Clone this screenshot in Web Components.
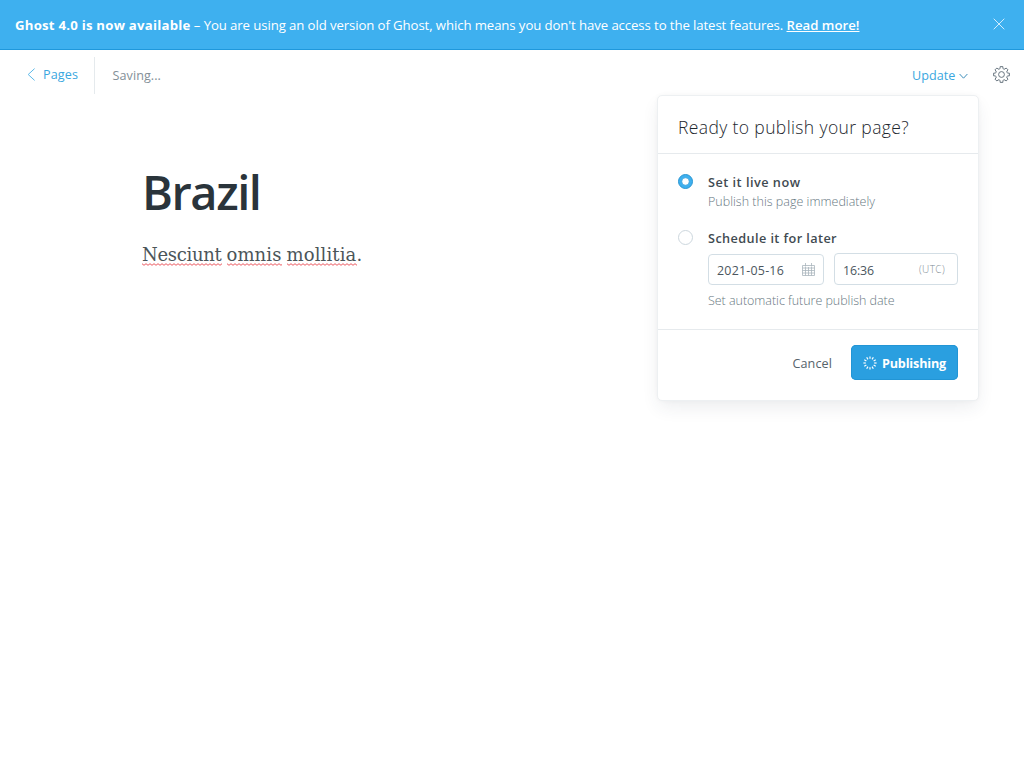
<!DOCTYPE html>
<html lang="en">
<head>
<meta charset="utf-8">
<title>Brazil - Editor</title>
<style>
html,body{margin:0;height:100%;background:#fff;overflow:hidden}
body{font-family:"Open Sans","Noto Sans",sans-serif;color:#394047}
</style>
</head>
<body>
<editor-app></editor-app>
<script>
const define = (name, html, init) => customElements.define(name, class extends HTMLElement {
  constructor(){ super(); const t=document.createElement('template'); t.innerHTML=html;
    this.attachShadow({mode:'open'}).append(t.content.cloneNode(true)); }
  connectedCallback(){ if(init) init(this); }
});

/* One line of text tracked to fill the width given in its "w" attribute. */
define('fit-text', `<style>:host{display:inline-block;white-space:pre;line-height:20px;flex:none}</style><slot></slot>`, el=>{
  const w=+el.getAttribute('w'); if(!w) return;
  el.style.letterSpacing='0px';
  const n=el.textContent.length;
  el.style.letterSpacing=((w-el.getBoundingClientRect().width)/n).toFixed(4)+'px';
});

define('upgrade-banner', `<style>
:host{display:flex;box-sizing:border-box;height:50px;padding:0 19px 0 15px;align-items:center;background:#3eb0ef;border-bottom:1px solid #1f98dc;color:#fff;font-size:13.2px}
.b{font-weight:700}.l{font-weight:600;text-decoration:underline;text-underline-offset:1px}
svg{margin-left:auto;margin-top:-1px}
</style><fit-text class="b" w="175.500">Ghost 4.0 is now available</fit-text><fit-text w="596"> – You are using an old version of Ghost, which means you don't have access to the latest features. </fit-text><fit-text class="l" w="73">Read more!</fit-text>
<svg width="12" height="12" viewBox="0 0 12 12" fill="none" stroke="#e2f4ff" stroke-width=".9"><path d="M.7.7l10.6 10.6M11.3.7L.7 11.3"/></svg>`);

define('editor-toolbar', `<style>
:host{display:flex;height:45px;padding:0 14.500px 0 27px;align-items:flex-start;font-size:12.6px;color:#3aa7e0}
.back{display:flex;height:37px;margin-top:7px;padding-right:16px;border-right:1px solid #e5eaed;align-items:flex-start}
.back svg{margin:11px 7px 0 0}.back fit-text{margin-top:8px}
.s{color:#839098;margin:16px 0 0 17.500px}
.up{margin:16px 3px 0 auto}
.chev{margin-top:23px}
.gear{margin:15.500px 0 0 25px;flex:none}
</style><div class="back"><svg width="9" height="13" viewBox="0 0 9 13" fill="none" stroke="#5bb8e8"><path d="M7.6.6L1.2 6.5l6.4 5.9"/></svg><fit-text w="35">Pages</fit-text></div>
<fit-text class="s" w="48.500">Saving...</fit-text>
<fit-text class="up" w="43.500">Update</fit-text>
<svg class="chev" width="9" height="7" viewBox="0 0 9 7" fill="none" stroke="#3f8fbb"><path d="M.6 1l3.9 4.200L8.400 1"/></svg>
<svg class="gear" width="17" height="17" viewBox="0 0 17 17" fill="none" stroke="#62707a" stroke-width=".95" stroke-linejoin="round"><circle cx="8.500" cy="8.500" r="2.900"/><path/></svg>`, el=>{
  /* Eight-toothed cog outline with rounded valleys. */
  const c=8.5, p=(r,a)=>(c+r*Math.cos(a)).toFixed(2)+' '+(c+r*Math.sin(a)).toFixed(2);
  let d='';
  for(let i=0;i<8;i++){ const a=i*Math.PI/4;
    d+=(i?'L':'M')+p(8,a-.17)+'L'+p(8,a+.17)+'L'+p(6.5,a+.22)+'Q'+p(5,a+Math.PI/8)+' '+p(6.5,a+Math.PI/4-.22); }
  el.shadowRoot.querySelector('.gear path').setAttribute('d',d+'Z');
});

define('post-body', `<style>
:host{display:block;padding:67px 0 0 142px}
h1{margin:0;font-size:47px;font-weight:600;line-height:60px;color:#2a343b;height:60px}
p{margin:17px 0 0;font:18px/30px "DejaVu Serif",serif;color:#4b5559;display:flex}
p fit-text{line-height:32px;height:30px}
.m{background:url("data:image/svg+xml,%3Csvg xmlns='http://www.w3.org/2000/svg' width='4' height='3'%3E%3Cpath d='M0 .7L2 2.300 4 .7' fill='none' stroke='%23e9474f' stroke-width='.9'/%3E%3C/svg%3E") 0 24px/4px 3px repeat-x}
</style><h1><fit-text style="line-height:60px" w="118.500">Brazil</fit-text></h1>
<p><fit-text class="m" w="79.500">Nesciunt</fit-text><fit-text w="5"> </fit-text><fit-text class="m" w="55">omnis</fit-text><fit-text w="5"> </fit-text><fit-text class="m" w="70">mollitia</fit-text><fit-text>.</fit-text></p>`);

define('radio-option', `<style>
:host{display:flex;align-items:flex-start}
svg{flex:none;margin-right:15px}
circle{fill:#fff;stroke:#ccd6dd}
:host([checked]) .o{fill:#3eb0ef;stroke:#2a96d2}
:host([checked]) .d{stroke:#2a96d2;stroke-width:.6}
:host(:not([checked])) .d{display:none}
div{display:flex;flex-direction:column;align-items:flex-start}
</style><svg width="15" height="15"><circle class="o" cx="7.5" cy="7.5" r="7"/><circle class="d" cx="7.5" cy="7.5" r="3.700"/></svg><div><slot></slot></div>`);

define('input-box', `<style>
:host{display:flex;box-sizing:border-box;border:1px solid #d3dee5;border-radius:4px;padding:0 8px;color:#4b565e;font-size:12.400px;background:#fff;align-items:center;justify-content:space-between}
</style><slot></slot>`);

define('publish-menu', `<style>
:host{position:absolute;left:657px;top:95px;width:322px;height:306px;box-sizing:border-box;border:1px solid #edf0f2;border-radius:5px;background:#fff;box-shadow:0 8px 18px -2px rgba(40,60,75,.09),0 0 4px rgba(40,60,75,.03)}
header{box-sizing:border-box;height:58px;padding:18px 20px 0;border-bottom:1px solid #e6eaed;font-size:17.500px}
header fit-text{line-height:26px;font-weight:300;color:#1d272e}
main{box-sizing:border-box;height:176px;padding:20px 20px 0;border-bottom:1px solid #e6eaed}
.t{font-size:12.700px;font-weight:600;color:#3f4a51;margin-top:-2px}
.d{font-size:12.500px;font-weight:300;color:#687882}
radio-option+radio-option{margin-top:18px}
.f{display:flex;gap:10px;align-items:flex-end;margin:5px 0 6px}
footer{display:flex;justify-content:flex-end;align-items:center;padding:15px 20px 0;font-size:12.600px;color:#56636b}
.btn{display:flex;align-items:center;box-sizing:border-box;width:107px;height:35px;margin-left:19px;padding-left:11.500px;border-radius:5px;background:#2a9fe0;box-shadow:inset 0 0 0 1px #2295d5;color:#fff;font-weight:700}
footer fit-text{position:relative;top:1px}
.btn svg{margin-right:5.500px}
</style>
<header><fit-text w="231">Ready to publish your page?</fit-text></header>
<main>
<radio-option checked style="height:38px"><fit-text class="t" w="92.500">Set it live now</fit-text><fit-text class="d" w="167">Publish this page immediately</fit-text></radio-option>
<radio-option><fit-text class="t" w="129">Schedule it for later</fit-text>
<div class="f"><input-box style="width:116px;height:31px"><fit-text w="67" style="margin-top:2px">2021-05-16</fit-text><svg width="13" height="13" viewBox="0 0 13 13" fill="none" stroke="#aab5bd" stroke-width=".8"><path d="M.5 2.500h12v10H.5zM.5 5h12M.5 7.500h12M.5 10h12M3.500 4v8.500M6.500 4v8.500M9.500 4v8.500M3.500 0v3.500M9.500 0v3.500"/></svg></input-box>
<input-box style="width:124px;height:32px;padding-right:12px"><fit-text w="31" style="margin-top:3px">16:36</fit-text><fit-text w="26" style="font-size:10px;color:#7d8b94;font-weight:300">(UTC)</fit-text></input-box></div>
<fit-text class="d" w="186.500">Set automatic future publish date</fit-text></radio-option>
</main>
<footer><fit-text w="39.500">Cancel</fit-text><div class="btn"><svg width="14" height="14" viewBox="-7 -7 14 14" stroke="#fff" stroke-width="1.2"></svg><fit-text w="64">Publishing</fit-text></div></footer>`, el=>{
  let s='';
  for(let i=0;i<12;i++) s+=`<path d="M0-4.200V-6.600" transform="rotate(${i*30})"/>`;
  el.shadowRoot.querySelector('.btn svg').innerHTML=s;
});

define('editor-app', `<style>:host{display:block;position:relative;width:1024px;height:768px;overflow:hidden;background:#fff}</style>
<upgrade-banner></upgrade-banner><editor-toolbar></editor-toolbar><post-body></post-body><publish-menu></publish-menu>`);
</script>
</body>
</html>
